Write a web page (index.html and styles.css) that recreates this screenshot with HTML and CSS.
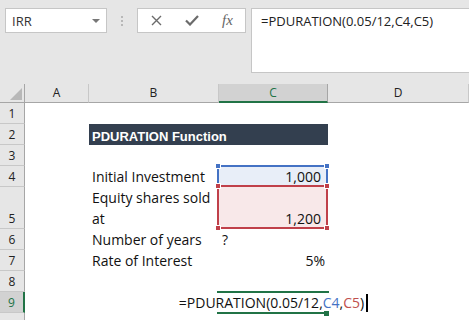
FILE: index.html
```html
<!DOCTYPE html>
<html lang="en">
<head>
    <meta charset="UTF-8">
    <meta name="viewport" content="width=device-width, initial-scale=1.0">
    <title>PDURATION Function</title>
    <link rel="stylesheet" href="styles.css">
</head>
<body>
    <div class="toolbar">
        <div class="namebox"><span>IRR</span><span class="caret"></span></div>
        <div class="grip"><i></i><i></i><i></i></div>
        <div class="fnbox">
            <span class="ico">
                <svg width="11" height="11" viewBox="0 0 11 11"><path d="M1 1L10 10M10 1L1 10" stroke="#6b6b6b" stroke-width="1.4" fill="none"/></svg>
            </span>
            <span class="ico">
                <svg width="14" height="11" viewBox="0 0 14 11"><path d="M1 5.5L5 9.5L13 1" stroke="#6b6b6b" stroke-width="2.2" fill="none"/></svg>
            </span>
            <span class="ico fx">fx</span>
        </div>
        <div class="formula">=PDURATION(0.05/12,C4,C5)</div>
    </div>

    <div class="sheet">
        <!-- column headers -->
        <div class="corner">
            <svg width="25" height="18" viewBox="0 0 25 18"><path d="M22 4L22 16L10 16Z" fill="#b8b8b8"/></svg>
        </div>
        <div class="colhead">A</div>
        <div class="colhead">B</div>
        <div class="colhead active">C</div>
        <div class="colhead">D</div>

        <!-- row 1 -->
        <div class="rowhead">1</div>
        <div class="cell"></div><div class="cell"></div><div class="cell"></div><div class="cell"></div>

        <!-- row 2 -->
        <div class="rowhead">2</div>
        <div class="cell"></div>
        <div class="cell title">PDURATION Function</div>
        <div class="cell"></div>

        <!-- row 3 -->
        <div class="rowhead">3</div>
        <div class="cell"></div><div class="cell"></div><div class="cell"></div><div class="cell"></div>

        <!-- row 4 -->
        <div class="rowhead">4</div>
        <div class="cell"></div>
        <div class="cell">Initial Investment</div>
        <div class="cell num ref-c4">1,000<span class="range blue"><span class="handle tl"></span><span class="handle tr"></span></span></div>
        <div class="cell"></div>

        <!-- row 5 -->
        <div class="rowhead">5</div>
        <div class="cell"></div>
        <div class="cell wrap">Equity shares sold<br>at</div>
        <div class="cell num ref-c5">1,200<span class="range red"><span class="handle tl"></span><span class="handle tr"></span><span class="handle bl"></span><span class="handle br"></span></span></div>
        <div class="cell"></div>

        <!-- row 6 -->
        <div class="rowhead">6</div>
        <div class="cell"></div>
        <div class="cell">Number of years</div>
        <div class="cell">?</div>
        <div class="cell"></div>

        <!-- row 7 -->
        <div class="rowhead">7</div>
        <div class="cell"></div>
        <div class="cell">Rate of Interest</div>
        <div class="cell num pct">5%</div>
        <div class="cell"></div>

        <!-- row 8 -->
        <div class="rowhead">8</div>
        <div class="cell"></div><div class="cell"></div><div class="cell"></div><div class="cell"></div>

        <!-- row 9 -->
        <div class="rowhead active">9</div>
        <div class="cell"></div>
        <div class="cell"></div>
        <div class="cell editing"><span class="edit-text">=PDURATION(0.05/12,<span class="blue-txt">C4</span>,<span class="red-txt">C5</span>)</span><span class="cursor"></span><span class="fill"></span></div>
        <div class="cell"></div>

        <!-- row 10, only its top shows -->
        <div class="rowhead"></div>
        <div class="cell"></div><div class="cell"></div><div class="cell"></div><div class="cell"></div>
    </div>
</body>
</html>
```

FILE: styles.css
```css
* {
    box-sizing: border-box;
}
body {
    margin: 0;
    width: 469px;
    height: 320px;
    overflow: hidden;
    font-family: "Open Sans", sans-serif;
    color: #111;
    background: #fff;
}

/* formula bar */
.toolbar {
    height: 84px;
    background: #e6e6e6;
    display: flex;
    align-items: flex-start;
    padding: 8px 0 0 5px;
}
.namebox {
    width: 102px;
    height: 25px;
    background: #fff;
    border: 1px solid #c6c6c6;
    display: flex;
    align-items: center;
    justify-content: space-between;
    padding: 0 6px;
    font-size: 13px;
    line-height: 18px;
    color: #333;
}
.caret {
    border-left: 4px solid transparent;
    border-right: 4px solid transparent;
    border-top: 4px solid #777;
}
.grip {
    width: 30px;
    height: 25px;
    display: flex;
    flex-direction: column;
    align-items: center;
    justify-content: center;
    gap: 2px;
}
.grip i {
    width: 2px;
    height: 2px;
    background: #b8b8b8;
}
.fnbox {
    width: 109px;
    height: 25px;
    background: #fff;
    border: 1px solid #c6c6c6;
    display: flex;
    align-items: center;
}
.ico {
    width: 36px;
    flex-shrink: 0;
    display: flex;
    justify-content: center;
    align-items: center;
}
.fnbox .fx {
    width: 35px;
    font-family: "Liberation Serif", serif;
    font-style: italic;
    font-size: 15px;
    color: #666;
}
.formula {
    flex: 1;
    margin-left: 5px;
    margin-right: -2px;
    height: 65px;
    background: #fff;
    border: 1px solid #c6c6c6;
    padding: 3px 0 0 9px;
    font-size: 13px;
    line-height: 18px;
    color: #222;
}

/* sheet */
.sheet {
    display: grid;
    grid-template-columns: 25px 64px 130px 109px 1fr;
    grid-template-rows: 19px 21px 21px 21px 21px 42px 21px 21px 21px 21px 21px;
}
.corner {
    background: #e6e6e6;
    border-right: 1px solid #a6a6a6;
    border-bottom: 1px solid #a6a6a6;
}
.corner svg {
    display: block;
}
.colhead {
    background: #e6e6e6;
    border-right: 1px solid #c8c8c8;
    border-bottom: 1px solid #a6a6a6;
    display: flex;
    align-items: center;
    justify-content: center;
    font-size: 12px;
    line-height: 18px;
    color: #222;
}
.colhead.active {
    background: #d2d2d2;
    color: #217346;
    border-right-color: #a6a6a6;
    border-bottom: 2px solid #217346;
}
.rowhead {
    background: #e6e6e6;
    border-right: 1px solid #a6a6a6;
    border-bottom: 1px solid #c8c8c8;
    display: flex;
    align-items: flex-end;
    justify-content: center;
    padding-bottom: 1px;
    font-size: 12px;
    line-height: 16px;
    color: #222;
}
.rowhead.active {
    background: #d2d2d2;
    color: #217346;
    border-right: 2px solid #217346;
}
.cell {
    display: flex;
    align-items: flex-end;
    padding: 0 3px;
    font-size: 14px;
    line-height: 20px;
    white-space: nowrap;
}
.cell.wrap {
    line-height: 21px;
}
.cell.num {
    justify-content: flex-end;
    padding-right: 7px;
}
.cell.pct {
    padding-right: 3px;
}
.title {
    grid-column: span 2;
    background: #333f4f;
    color: #fff;
    font-family: "Liberation Sans", Arial, sans-serif;
    font-weight: bold;
    font-size: 13px;
    line-height: 17px;
}

/* referenced ranges */
.ref-c4 {
    position: relative;
    background: #e8eef8;
}
.ref-c5 {
    position: relative;
    background: #f8e8e9;
}
.range {
    position: absolute;
    left: -2px;
    right: 0;
    top: -1px;
    bottom: 0;
    border: 2px solid;
}
.range.blue {
    border-color: #4472c4;
}
.range.red {
    border-color: #c0404a;
    top: -2px;
}
.handle {
    position: absolute;
    width: 6px;
    height: 6px;
    border: 1px solid #fff;
}
.blue .handle {
    background: #4472c4;
}
.red .handle {
    background: #c0404a;
}
.handle.tl { left: -4px; top: -4px; }
.handle.tr { right: -4px; top: -4px; }
.handle.bl { left: -4px; bottom: -4px; }
.handle.br { right: -4px; bottom: -4px; }

/* cell in edit mode */
.editing {
    position: relative;
    justify-content: center;
}
.editing::before,
.editing::after {
    content: "";
    position: absolute;
    left: -2px;
    height: 2px;
    background: #217346;
}
.editing::before {
    top: -1px;
    right: -1px;
}
.editing::after {
    bottom: -1px;
    right: 4px;
}
.editing .fill {
    position: absolute;
    right: -1px;
    bottom: -3px;
    width: 5px;
    height: 5px;
    background: #217346;
}
.edit-text {
    flex-shrink: 0;
}
.blue-txt {
    color: #4472c4;
}
.red-txt {
    color: #c0504d;
}
.cursor {
    display: block;
    flex-shrink: 0;
    width: 2px;
    height: 18px;
    margin: 0 0 1px 2px;
    background: #000;
}
```
